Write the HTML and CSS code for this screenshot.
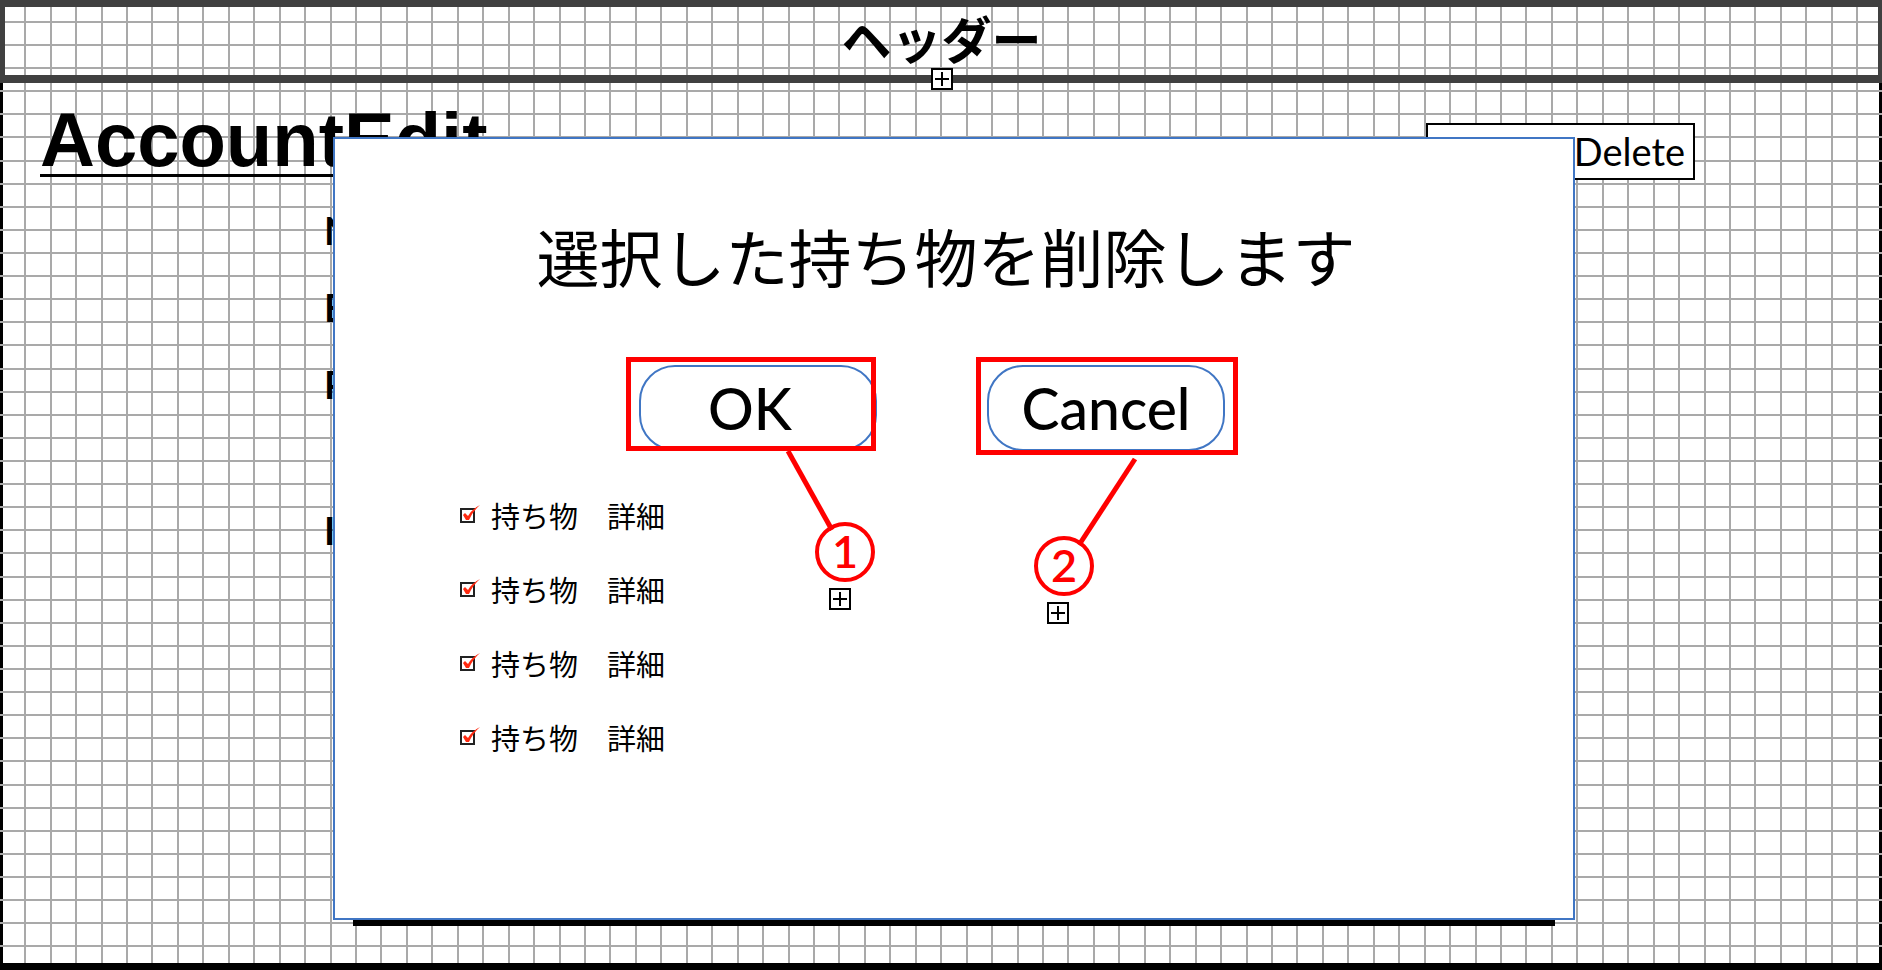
FILE: index.html
```html
<!DOCTYPE html>
<html lang="ja">
<head>
<meta charset="utf-8">
<title>AccountEdit</title>
<link rel="stylesheet" href="styles.css">
</head>
<body>
<div class="screen">
  <svg class="grid" aria-hidden="true">
    <defs>
      <pattern id="cells" width="229" height="208" patternUnits="userSpaceOnUse">
        <path fill="#a9a9a9" d="M-1 0h2v208h-2zM24 0h2v208h-2zM50 0h2v208h-2zM75 0h2v208h-2zM101 0h2v208h-2zM126 0h2v208h-2zM151 0h2v208h-2zM177 0h2v208h-2zM202 0h2v208h-2zM228 0h2v208h-2z"/>
      </pattern>
      <pattern id="rows" width="229" height="208" patternUnits="userSpaceOnUse">
        <path fill="#a9a9a9" d="M0 21h229v2H0zM0 44h229v2H0zM0 67h229v2H0zM0 90h229v2H0zM0 113h229v2H0zM0 136h229v2H0zM0 160h229v2H0zM0 183h229v2H0zM0 206h229v2H0z"/>
      </pattern>
    </defs>
    <rect width="100%" height="100%" fill="url(#cells)"/>
    <rect class="edge" width="100%" height="100%"/>
    <rect width="100%" height="100%" fill="url(#rows)"/>
  </svg>

  <header class="header">
    <h2 class="header-title">ヘッダー</h2>
    <svg class="header-plus" width="22" height="22" viewBox="0 0 22 22" aria-hidden="true">
      <rect x="1" y="1" width="20" height="20" fill="#fff" stroke="#000" stroke-width="2"/>
      <path d="M4 11h14M11 4v14" stroke="#000" stroke-width="2"/>
    </svg>
  </header>

  <main class="page">
    <div class="page-top">
      <h1 class="page-title">AccountEdit</h1>
      <button class="delete" type="button">AccountDelete</button>
    </div>
    <ul class="fields">
      <li>Name</li>
      <li>Email</li>
      <li>Password</li>
      <li class="field-last">Icon</li>
    </ul>
  </main>

  <section class="modal" role="dialog" aria-labelledby="modal-title">
    <h2 class="modal-title" id="modal-title">選択した持ち物を削除します</h2>
    <div class="actions">
      <div class="action action-ok">
        <button class="choice" type="button">OK</button>
        <svg class="callout" width="238" height="262" viewBox="0 0 238 262" aria-hidden="true">
          <path class="lead" d="M149 86L193 165"/>
          <circle class="ring" cx="206" cy="187" r="28"/>
          <text class="number" x="206" y="203">1</text>
          <rect x="191" y="224" width="20" height="20" fill="#fff" stroke="#000" stroke-width="2"/>
          <path d="M194 234h14M201 227v14" stroke="#000" stroke-width="2"/>
        </svg>
      </div>
      <div class="action action-cancel">
        <button class="choice" type="button">Cancel</button>
        <svg class="callout" width="238" height="262" viewBox="0 0 238 262" aria-hidden="true">
          <path class="lead" d="M148 94L92 180"/>
          <circle class="ring" cx="77" cy="201" r="28"/>
          <text class="number" x="77" y="217">2</text>
          <rect x="61" y="238" width="20" height="20" fill="#fff" stroke="#000" stroke-width="2"/>
          <path d="M64 248h14M71 241v14" stroke="#000" stroke-width="2"/>
        </svg>
      </div>
    </div>
    <ul class="items">
      <li><label class="item"><span class="tick"><input type="checkbox" checked><svg width="20" height="20" viewBox="0 0 20 20" aria-hidden="true"><path d="M3 10L5 8L8 11Q12 4 20 0Q13 6 9 15L6 15Z"/></svg></span>持ち物　詳細</label></li>
      <li><label class="item"><span class="tick"><input type="checkbox" checked><svg width="20" height="20" viewBox="0 0 20 20" aria-hidden="true"><path d="M3 10L5 8L8 11Q12 4 20 0Q13 6 9 15L6 15Z"/></svg></span>持ち物　詳細</label></li>
      <li><label class="item"><span class="tick"><input type="checkbox" checked><svg width="20" height="20" viewBox="0 0 20 20" aria-hidden="true"><path d="M3 10L5 8L8 11Q12 4 20 0Q13 6 9 15L6 15Z"/></svg></span>持ち物　詳細</label></li>
      <li><label class="item"><span class="tick"><input type="checkbox" checked><svg width="20" height="20" viewBox="0 0 20 20" aria-hidden="true"><path d="M3 10L5 8L8 11Q12 4 20 0Q13 6 9 15L6 15Z"/></svg></span>持ち物　詳細</label></li>
    </ul>
  </section>
</div>
</body>
</html>
```
FILE: styles.css
```css
* {
  box-sizing: border-box;
}

body {
  margin: 0;
  background: #fff;
  color: #000;
  font-family: Lato, "Noto Sans CJK JP", sans-serif;
}

h1,
h2,
ul {
  margin: 0;
  padding: 0;
}

ul {
  list-style: none;
}

button {
  color: #000;
  font-family: inherit;
}

.screen {
  position: relative;
  display: flex;
  flex-direction: column;
  min-height: 100vh;
  border-bottom: 4px solid #000;
}

/* Squared-paper backdrop */
.grid {
  position: absolute;
  inset: 0;
  width: 100%;
  height: 100%;
}

.edge {
  fill: none;
  stroke: #000;
  stroke-width: 6px;
}

.header {
  position: relative;
  display: flex;
  justify-content: center;
  height: 83px;
  border: solid #404040;
  border-width: 7px 4px 8px 5px;
}

.header-title {
  font-family: "Noto Sans CJK JP", sans-serif;
  font-size: 50px;
  line-height: 60px;
  font-weight: 700;
}

.header-plus {
  position: absolute;
  left: 50%;
  bottom: -15px;
  margin-left: -11px;
}

.page {
  position: relative;
  flex: 1;
  padding: 20px 187px 0 40px;
}

.page-top {
  display: flex;
  justify-content: space-between;
  align-items: flex-start;
}

.page-title {
  padding-top: 3px;
  border-bottom: 3px solid #000;
  font-family: "Liberation Sans", Arial, sans-serif;
  font-size: 76px;
  line-height: 68px;
}

.delete {
  margin-top: 20px;
  padding: 0 8px;
  border: 2px solid #000;
  background: #fff;
  font-size: 38px;
  line-height: 53px;
}

.fields {
  padding: 27px 0 0 284px;
  font-size: 38px;
  line-height: 47px;
  font-weight: 700;
}

.fields li {
  margin-bottom: 30px;
}

.fields .field-last {
  margin-top: 99px;
}

.modal {
  position: absolute;
  inset: 137px 307px 46px 333px;
  display: flex;
  flex-direction: column;
  padding-top: 68px;
  border: 2px solid #4076c4;
  background: #fff;
}

.modal::after {
  content: "";
  position: absolute;
  top: 100%;
  left: 18px;
  right: 18px;
  height: 6px;
  margin-top: 2px;
  background: #000;
}

.modal-title {
  padding-right: 16px;
  text-align: center;
  font-family: "Noto Sans CJK JP", sans-serif;
  font-size: 63px;
  line-height: 96px;
  font-weight: 400;
}

.actions {
  display: flex;
  justify-content: center;
  gap: 110px;
  margin-top: 62px;
  padding-right: 44px;
}

.action {
  position: relative;
}

.choice {
  display: block;
  width: 238px;
  height: 86px;
  padding: 0;
  border: 2px solid #4076c4;
  border-radius: 36px;
  background: #fff;
  font-size: 57px;
  line-height: 80px;
  font-weight: 500;
}

.action-ok .choice {
  padding-right: 16px;
}

/* Red annotation frames round the two buttons */
.action::after {
  content: "";
  position: absolute;
  border: 5px solid #f00;
  pointer-events: none;
}

.action-ok::after {
  inset: -8px 1px 0 -13px;
}

.action-cancel::after {
  inset: -8px -13px -4px -11px;
}

.callout {
  position: absolute;
  top: 0;
  left: 0;
  pointer-events: none;
}

.lead,
.ring {
  fill: none;
  stroke: #f00;
}

.lead {
  stroke-width: 5px;
}

.ring {
  stroke-width: 4px;
}

.number {
  fill: #f00;
  font-size: 45px;
  font-weight: 600;
  text-anchor: middle;
}

.items {
  display: flex;
  flex-direction: column;
  gap: 44px;
  margin-top: 49px;
  padding-left: 125px;
}

.item {
  display: inline-flex;
  align-items: center;
  gap: 11px;
  font-family: "Noto Sans CJK JP", sans-serif;
  font-size: 29px;
  line-height: 30px;
}

.tick {
  display: grid;
  width: 20px;
  height: 20px;
  align-items: center;
}

.tick input {
  grid-area: 1 / 1;
  appearance: none;
  width: 15px;
  height: 15px;
  margin: 0;
  border: 2px solid #222;
}

.tick svg {
  grid-area: 1 / 1;
  fill: #ff2a10;
  pointer-events: none;
}
```
